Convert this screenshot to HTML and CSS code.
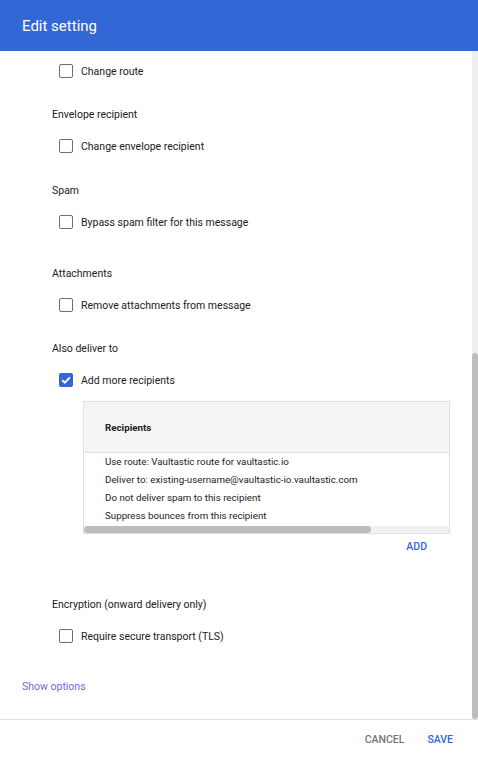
FILE: index.html
```html
<!DOCTYPE html>
<html>
<head>
<meta charset="utf-8">
<link rel="stylesheet" href="styles.css">
</head>
<body>
<div class="dialog">
  <header class="header">Edit setting</header>
  <div class="body">
    <div class="content">
      <label class="row first"><span class="box"></span><span>Change route</span></label>

      <div class="label s-env">Envelope recipient</div>
      <label class="row"><span class="box"></span><span>Change envelope recipient</span></label>

      <div class="label s-spam">Spam</div>
      <label class="row"><span class="box"></span><span>Bypass spam filter for this message</span></label>

      <div class="label s-att">Attachments</div>
      <label class="row"><span class="box"></span><span>Remove attachments from message</span></label>

      <div class="label s-also">Also deliver to</div>
      <label class="row"><span class="box checked"><svg viewBox="0 0 14 14" width="14" height="14"><path d="M3.2 7.2 L5.8 9.7 L10.9 4.4" fill="none" stroke="#fff" stroke-width="1.9"/></svg></span><span>Add more recipients</span></label>

      <div class="table">
        <div class="thead">Recipients</div>
        <div class="tbody">
          <div class="trow">Use route: Vaultastic route for vaultastic.io</div>
          <div class="trow">Deliver to: existing-username@vaultastic-io.vaultastic.com</div>
          <div class="trow">Do not deliver spam to this recipient</div>
          <div class="trow">Suppress bounces from this recipient</div>
        </div>
        <div class="hscroll"><div class="hthumb"></div></div>
      </div>
      <div class="add-line"><span class="btn-add">ADD</span></div>

      <div class="label s-enc">Encryption (onward delivery only)</div>
      <label class="row"><span class="box"></span><span>Require secure transport (TLS)</span></label>

      <div class="show">Show options</div>
    </div>
    <div class="vscroll"><div class="vthumb"></div></div>
  </div>
  <footer class="footer">
    <span class="btn cancel">CANCEL</span>
    <span class="btn save">SAVE</span>
  </footer>
</div>
</body>
</html>
```
FILE: styles.css
```css
* { box-sizing: border-box; }
html, body { margin: 0; padding: 0; background: #fff; }
body {
  font-family: Roboto, "Liberation Sans", Arial, sans-serif;
  color: #212121;
  width: 478px;
  height: 759px;
  overflow: hidden;
}
.dialog { display: flex; flex-direction: column; height: 759px; }
.header {
  height: 51px;
  background: #3367d6;
  color: #fff;
  font-size: 15px;
  padding-left: 22px;
  display: flex;
  align-items: center;
  flex: none;
}
.body {
  display: flex;
  height: 668px;
  flex: none;
}
.content {
  flex: 1;
  padding: 0 22px 0 52px;
  font-size: 10.5px;
}
.vscroll {
  width: 6px;
  background: #efefef;
  display: flex;
  flex-direction: column;
  justify-content: flex-end;
}
.vthumb {
  height: 366px;
  background: #bdbdbd;
  border-radius: 3px;
}
.label {
  height: 20px;
  line-height: 20px;
  margin-bottom: 11px;
}
.s-env { margin-top: 24px; }
.s-spam { margin-top: 25px; }
.s-att { margin-top: 32px; }
.s-also { margin-top: 24px; }
.s-enc { margin-top: 37px; }
.row {
  display: flex;
  align-items: center;
  height: 20px;
  padding-left: 7px;
  gap: 8px;
}
.row.first { margin-top: 10px; }
.box {
  width: 14px;
  height: 14px;
  border: 1.5px solid #6e6e6e;
  border-radius: 2px;
  flex: none;
  display: flex;
}
.box.checked {
  border: none;
  background: #3367d6;
}
.table {
  margin: 11px 0 0 31px;
  border: 1px solid #e0e0e0;
}
.thead {
  height: 51px;
  background: #f5f5f5;
  border-bottom: 1px solid #e0e0e0;
  font-weight: bold;
  font-size: 9.75px;
  padding-left: 21px;
  display: flex;
  align-items: center;
}
.trow {
  height: 18px;
  line-height: 18px;
  font-size: 9.75px;
  padding-left: 21px;
  white-space: nowrap;
}
.hscroll {
  height: 7px;
  background: #f1f1f1;
  margin-top: 1px;
}
.hthumb {
  width: 287px;
  height: 7px;
  background: #bdbdbd;
  border-radius: 4px;
}
.add-line {
  height: 24px;
  display: flex;
  justify-content: flex-end;
  align-items: center;
  padding-right: 23px;
}
.btn-add {
  color: #3367d6;
  font-weight: 500;
  font-size: 10.5px;
}
.show {
  margin-top: 31px;
  margin-left: -30px;
  height: 20px;
  line-height: 20px;
  color: #6f6ae0;
}
.footer {
  flex: none;
  border-top: 1px solid #e0e0e0;
  height: 40px;
  display: flex;
  justify-content: flex-end;
  align-items: center;
  gap: 23px;
  padding-right: 25px;
  font-size: 10.5px;
  font-weight: 500;
}
.cancel { color: #757575; }
.save { color: #3367d6; }
```
